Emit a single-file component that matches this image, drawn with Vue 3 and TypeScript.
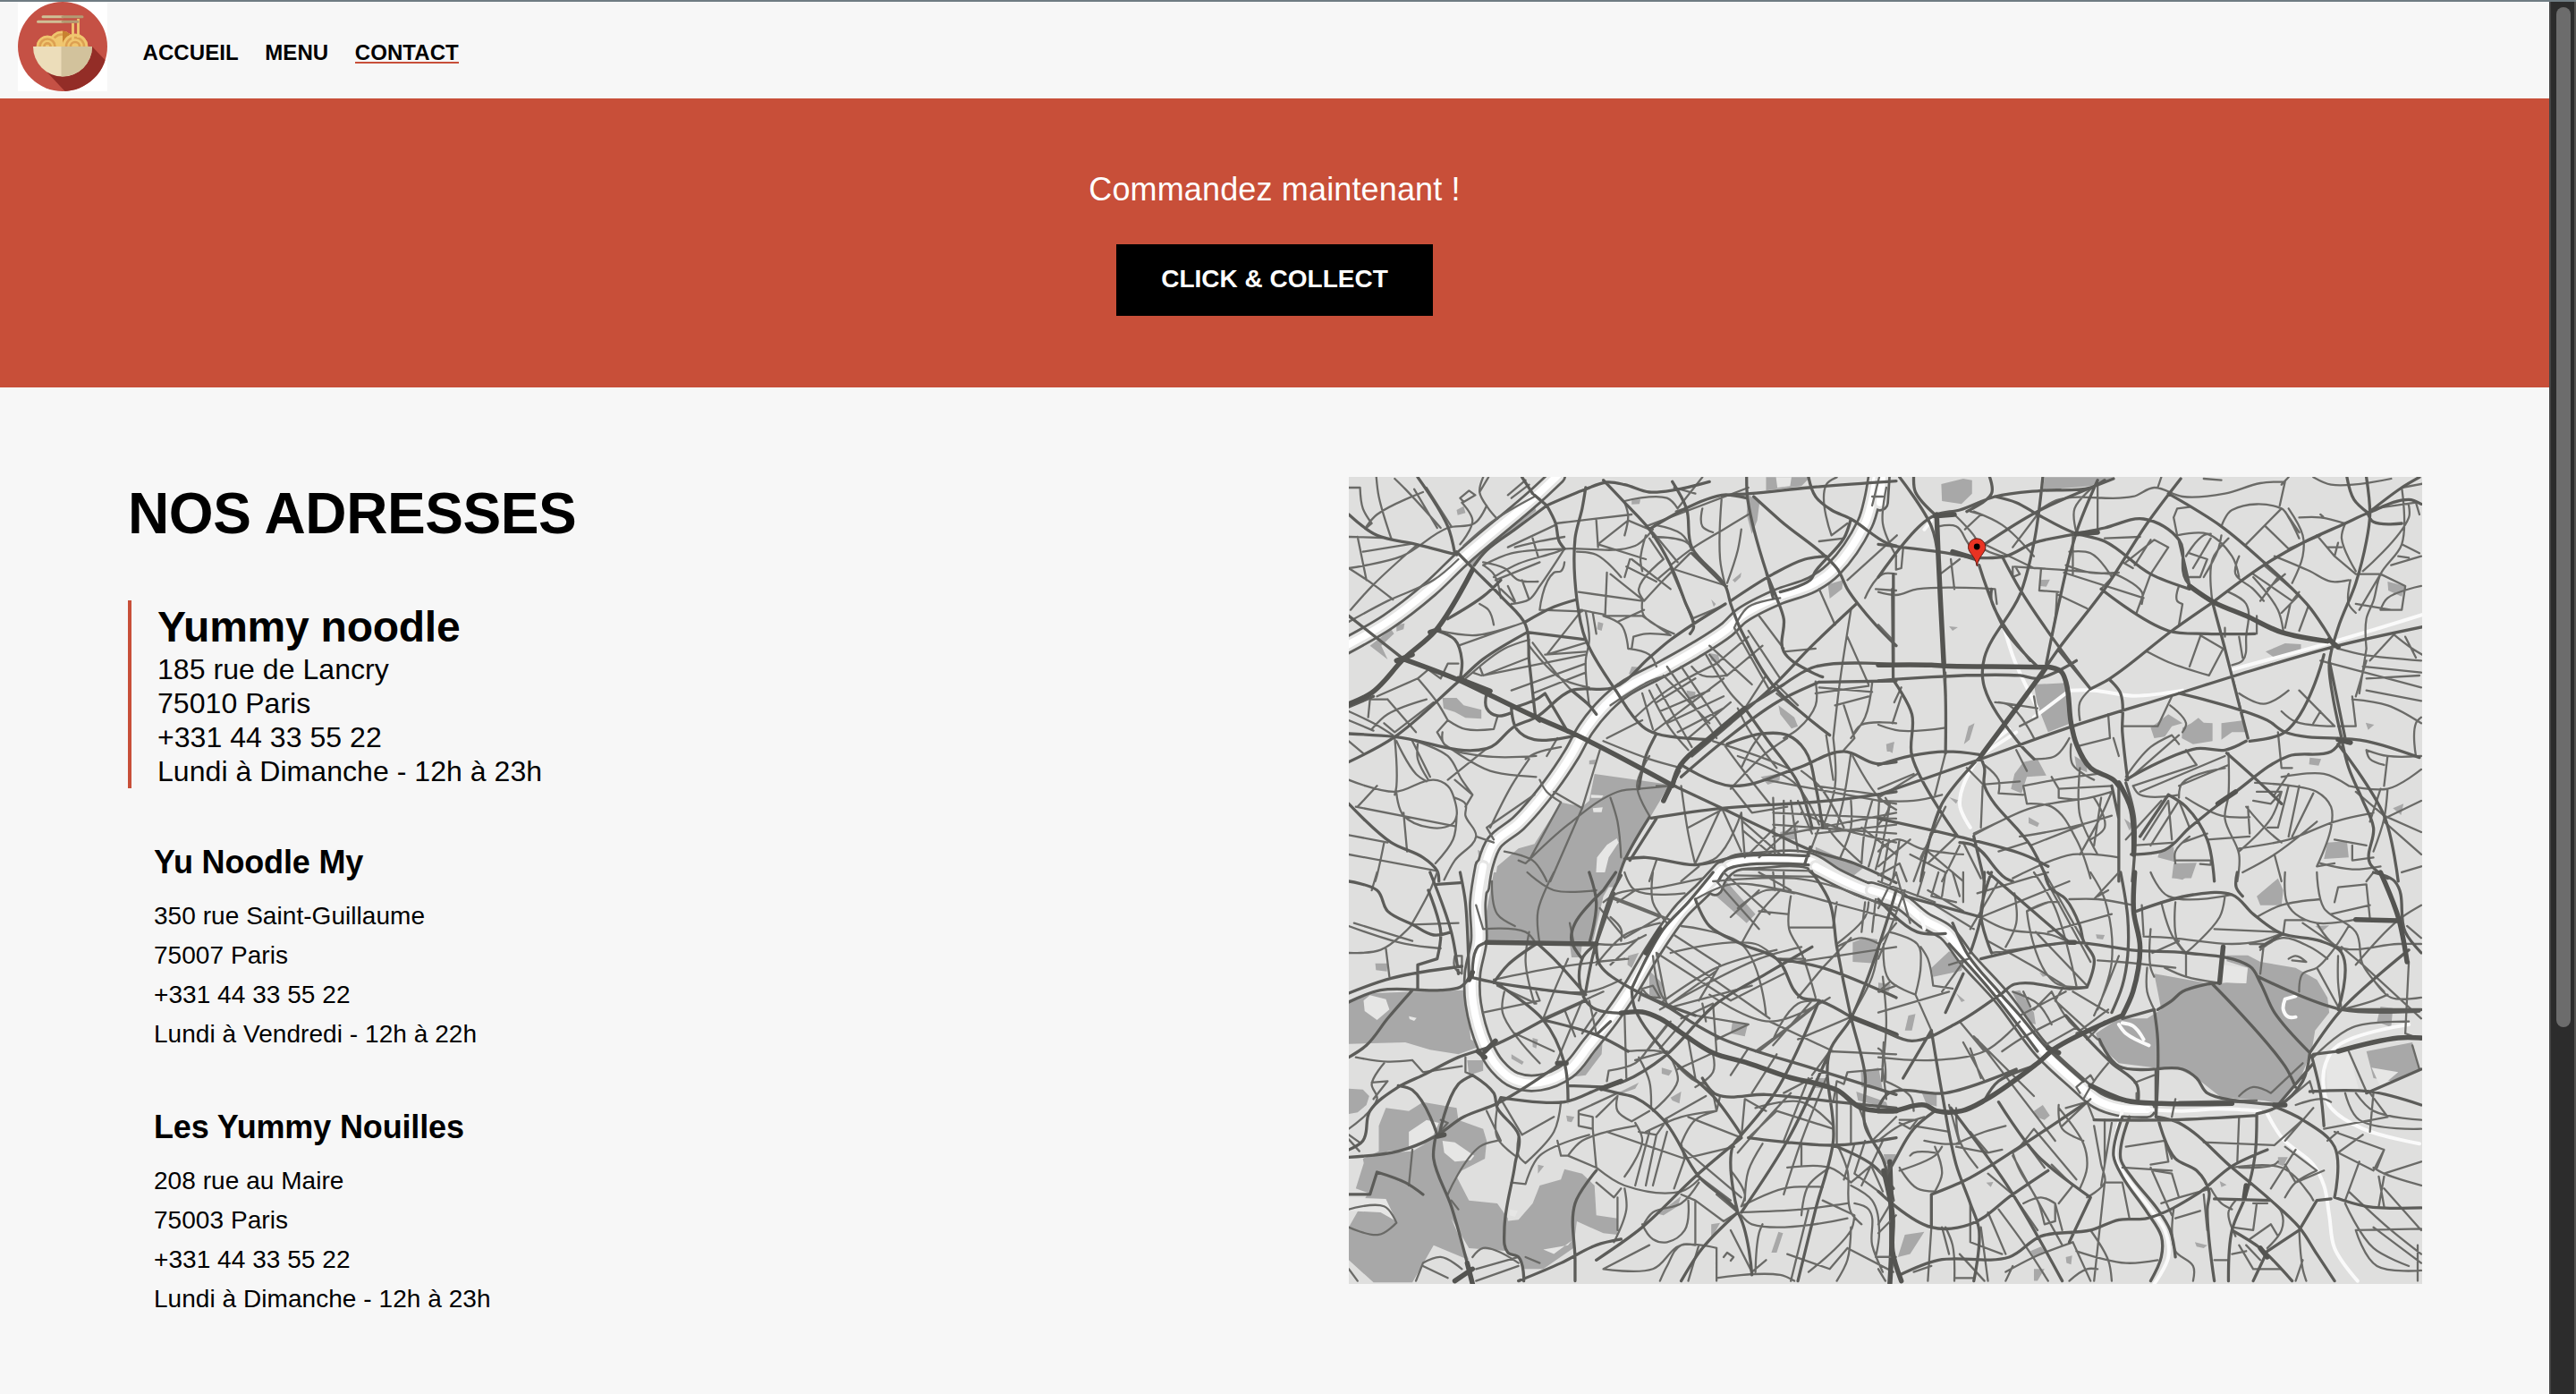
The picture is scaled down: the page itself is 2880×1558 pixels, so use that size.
<script setup lang="ts">
interface Address {
  name: string
  lines: string[]
  selected?: boolean
}

interface Tile {
  id: string
  x: number
  y: number
  parks: string
  pale?: string
  water: string
  narrow?: string
  major: string
  medium: string
  minor: string
}

const links = [
  { label: 'ACCUEIL', active: false },
  { label: 'MENU', active: false },
  { label: 'CONTACT', active: true },
]

const addresses: Address[] = [
  {
    name: 'Yummy noodle',
    lines: ['185 rue de Lancry', '75010 Paris', '+331 44 33 55 22', 'Lundi à Dimanche - 12h à 23h'],
    selected: true,
  },
  {
    name: 'Yu Noodle My',
    lines: ['350 rue Saint-Guillaume', '75007 Paris', '+331 44 33 55 22', 'Lundi à Vendredi - 12h à 22h'],
  },
  {
    name: 'Les Yummy Nouilles',
    lines: ['208 rue au Maire', '75003 Paris', '+331 44 33 55 22', 'Lundi à Dimanche - 12h à 23h'],
  },
]

// Turns "M x,y x,y ..." polylines into smooth curves, keeping sharp corners sharp.
function smooth(d: string): string {
  return d
    .split('M')
    .filter((part) => part.trim() !== '')
    .map((part) => {
      const pts = part
        .trim()
        .split(/\s+/)
        .map((pair) => pair.split(',').map(Number) as [number, number])
      const tangents = pts.map((p, i): [number, number] => {
        const a = pts[i - 1]
        const b = pts[i + 1]
        if (!a || !b) return [0, 0]
        const u = [p[0] - a[0], p[1] - a[1]]
        const v = [b[0] - p[0], b[1] - p[1]]
        const lu = Math.hypot(u[0], u[1])
        const lv = Math.hypot(v[0], v[1])
        if (lu === 0 || lv === 0 || (u[0] * v[0] + u[1] * v[1]) / (lu * lv) < 0.45) return [0, 0]
        const tx = u[0] / lu + v[0] / lv
        const ty = u[1] / lu + v[1] / lv
        const lt = Math.hypot(tx, ty)
        return [tx / lt, ty / lt]
      })
      let out = `M${pts[0][0]} ${pts[0][1]}`
      for (let i = 1; i < pts.length; i++) {
        const p = pts[i - 1]
        const q = pts[i]
        const k = Math.hypot(q[0] - p[0], q[1] - p[1]) * 0.33
        const s = tangents[i - 1]
        const t = tangents[i]
        const c = [p[0] + s[0] * k, p[1] + s[1] * k, q[0] - t[0] * k, q[1] - t[1] * k]
        out += `C${c.map((n) => n.toFixed(1)).join(' ')} ${q[0]} ${q[1]}`
      }
      return out
    })
    .join('')
}

// The map is split in four tiles; every tile has its own drawing units.
const tiles: Tile[] = [
  {
    id: 'nw',
    x: -8,
    y: -8,
    parks:
      'M545,120 550,138 470,215 400,285 370,335 352,312 400,245 480,170ZM715,1020 925,1055 900,1110 870,1170 800,1310 770,1400 430,1400 440,1330 500,1270 545,1255 620,1115 680,1130 700,1110ZM285,765 325,765 345,790 395,805 395,835 350,832 320,812 288,800ZM1150,85 1182,105 1175,170 1160,215 1145,150ZM1200,25 1325,25 1300,55 1200,70ZM1375,385 1418,370 1415,400 1380,432ZM1340,1265 1475,1335 1440,1368 1340,1315ZM1185,1030 1240,1018 1238,1042 1205,1056ZM80,590 140,535 148,550 112,590 130,636ZM1235,790 1280,830 1290,860 1272,868 1240,820ZM1040,615 1065,620 1070,650 1045,640ZM975,740 1000,745 1000,772 980,768ZM820,660 845,662 832,690 812,685ZM725,510 740,515 735,540 722,535ZM325,135 345,122 350,145 328,152ZM820,100 845,100 842,115 820,116ZM155,520 178,515 175,535 155,542ZM700,975 718,972 715,988 700,988ZM1540,925 1562,915 1555,945 1542,945ZM1105,370 1130,345 1128,360 1112,378ZM1240,1215 1290,1200 1285,1240 1240,1240ZM1045,435 1058,450 1052,460ZM385,1275 405,1285 390,1320Z',
    pale: 'M1228,25 1272,25 1268,55 1232,60ZM778,1236 783,1250 755,1300 738,1380 718,1375 722,1300 750,1258ZM705,1090 740,1092 735,1100 705,1100ZM710,1135 738,1132 735,1148 712,1148Z',
    water:
      'M1512,20 1500,100 1480,180 1390,335 1330,385 1230,428 1130,490 1090,535 1000,605 900,672 800,735 745,790 690,870 650,955 590,1060 500,1185 432,1250 405,1330 395,1400M1055,1400 1070,1360 1110,1320 1180,1310 1320,1310 1400,1365 1480,1410M610,20 545,92 340,298 250,400 130,510 10,592',
    major:
      'M370,335 265,540 175,635 85,748 20,785M175,635 330,705 410,750 550,830 665,890 930,1055M330,700 420,742M935,1060 958,990 1050,890 1140,800M932,1055 910,1110M155,640 200,620M545,825 560,840M250,545 275,535',
    medium:
      'M20,150 100,220 210,250 325,285M325,275 375,335 455,430 520,520 530,640 548,830M320,280 300,190 215,25M545,85 580,120 680,70 750,42 800,50 870,75 940,68 1040,40M375,320 410,270 490,200 580,120M540,80 510,25M580,120 605,180 615,240 630,265M690,60 680,130 660,230 665,435 690,570 775,740 850,860 890,885 1040,905M740,35 800,110 870,200 930,320 970,440 995,530 985,550M935,40 975,130 990,260 1085,390 1100,450 1130,540 1225,730 1380,890M1145,25 1148,100 1200,340 1230,430 1250,500 1250,610 1330,680 1360,695M1080,85 1155,80 1320,60 1568,38M1320,25 1340,90 1385,135 1440,165 1540,245 1568,255M1165,90 1240,170 1400,330 1430,400 1460,450 1510,520 1568,590M1560,350 1560,650M1250,720 1340,660 1568,654M1140,800 1250,720M1350,712 1568,708M1350,712 1230,780 1080,910 960,1030M20,490 100,565 175,635M20,980 145,900 330,710 400,635 525,545M20,885 150,895 410,935 490,860 550,830 650,740 770,730 870,630 930,570 1085,450M940,1060 1075,1135 1225,1220 1325,1275 1450,1320 1568,1385M875,1168 1075,1135 1380,1110 1568,1080M960,990 1100,1060 1290,1000 1420,945 1510,985 1568,980M20,1120 140,1250 230,1300 270,1345 275,1380M1455,450 1330,590 1220,725 1100,850 990,960M520,510 600,460 665,435M300,500 400,425 450,370M335,700 340,640 320,570 270,540M690,570 525,545M665,890 545,905 495,870 480,800 550,770 575,750 640,880M410,750 410,800 440,825 480,815M650,740 700,790 720,820M890,885 860,960 840,1070M1085,390 990,280M1100,440 1220,350 1310,300 1370,290M1440,165 1420,230 1340,340 1325,370 1240,410M1090,920 1190,885 1260,890 1310,940 1340,1060 1360,1200M1200,340 1220,430M1140,800 1200,900 1290,1050 1330,1200M870,200 1075,85 1145,95M955,1010 920,1090M870,1165 800,1310 780,1380M890,1170 815,1310M800,1305 860,1300 1000,1325 1130,1295 1320,1295M1065,1380 1090,1340 1140,1325 1320,1325M1325,1265 1310,1320M20,795 90,760',
    minor:
      'M20,60 52,60 60,130 85,180 70,195M98,25 105,90 140,230M150,30 180,65 280,195M205,65 270,195M240,60 310,190M70,190 100,150 230,75M20,225 115,228M45,225 70,370M60,275 200,248M20,330 170,290 300,195 375,180 410,120M20,330 90,385 145,435M25,470 90,385 210,255M20,510 130,440 260,370 330,300M340,110 370,170 335,250M335,95 360,70 378,85 345,108 335,95M400,25 390,75 415,130 440,165M415,25 390,75M345,255 430,170 545,90M470,85 520,35M480,95 530,50M450,430 430,350 400,320M400,310 460,330 500,370 555,375M430,360 500,315 610,275 630,265M435,370 560,310M630,265 560,390 530,435 480,450M630,310 620,340 600,345 560,470M450,400 490,445M470,390 490,440M510,370 530,435M400,320 480,280 630,265 830,255 880,200M490,260 560,240 630,225M540,230 555,290M605,180 640,175 820,150M605,185 470,260M720,170 725,260M665,275 720,285 790,360M725,250 860,300M800,110 810,155 800,220M730,245 810,170 870,200M800,105 920,95 950,130 1020,25M860,190 1150,60M970,130 945,140M860,220 845,300 850,340M870,230 910,300 840,400 855,440M820,300 930,400M805,325 890,375M815,300 800,360M760,350 855,440M750,345 745,490 850,490M670,410 850,440 855,490 940,550M675,470 740,485M855,440 910,370 985,280M855,470 780,510M895,365 930,330 1090,390M880,225 970,240 990,260M885,185 960,215 990,270M880,210 950,310M970,440 930,330M970,440 990,500 1070,460M690,475 700,570 690,640 700,790M710,480 720,550M740,490 790,520 810,600M820,600 825,560 860,550 930,555 850,490M810,600 870,620 890,660M690,580 580,620 680,470M540,580 650,740 690,780M690,620 400,690 390,660M530,570 460,600 370,680 395,690M530,630 400,690M530,590 620,700 700,730M540,750 690,680M480,740 690,650M575,620 690,610M350,700 390,660M390,450 415,470 430,520M520,510 330,590M275,540 380,555 520,510M560,470 680,475M20,810 90,850 145,890M20,840 90,875M75,830 80,770 130,770M100,760 215,700 270,780 300,840 270,880 290,920M215,700 245,670 280,700 300,650 330,650M260,780 150,880 120,850M130,770 210,880M300,840 350,870 430,870 440,830M85,870 130,820 240,770M150,900 155,1060 150,1090M155,910 210,1020 240,1045M200,910 250,1030M210,910 300,960 340,1040 370,1090M215,920 215,970 245,1040M20,910 60,950M285,880 290,920 400,960 550,960M290,920 420,1010 550,1030M20,1040 150,1080 260,1040 300,1060 320,1110 325,1160 310,1190 250,1200 175,1160 155,1085M45,1130 100,1060M40,1130 320,1195M175,1150 185,1280M20,1225 130,1250M120,1250 100,1360 95,1380M20,1290 270,1345M265,1320 315,1240 325,1160M290,1375 320,1310 380,1230 350,1160 350,1120 320,1100M410,935 300,1040M320,1040 370,1090 350,1130M530,970 480,1060 420,1200M520,970 550,950 620,930M600,1080 680,1135 730,940M610,900 580,960M560,1040 580,1080 620,1115M740,910 870,970 960,1000M750,900 850,840M760,790 870,710 920,690M870,740 930,870 980,940M890,720 990,930M910,690 1040,850M920,660 1060,900M960,660 1080,870M990,660 1020,690 1090,690 1040,620M850,750 880,870M890,780 1000,700M900,810 1040,740M920,850 1080,760M950,880 1080,800M980,900 1100,780M830,830 920,740 1060,650M880,880 1080,700M1030,620 1100,750 1140,800M1040,590 1160,720M1110,530 1210,740M1150,540 1240,700M1060,650 1150,560M1090,690 1190,590M1140,800 1200,690M1180,490 1250,600M1350,400 1395,520M1250,610 1340,600M1510,400 1568,405M1480,430 1530,350 1568,350M1540,60 1530,180 1568,290M1500,90 1530,90M1520,25 1500,120M1570,220 1430,370M1440,470 1410,700 1390,900M1430,560 1490,720M1500,715 1480,830 1440,900M1350,730 1500,745M1340,750 1490,725M1395,790 1490,760M1420,790 1450,900M1340,710 1340,790 1290,870 1250,900M1230,750 1380,890M1230,720 1290,790M1370,890 1390,1040M1450,880 1470,855 1568,850M1450,900 1420,940M1230,1000 1150,870 1120,800M1050,910 1200,970 1260,1000M1130,1000 1160,930 1190,880M1080,920 1130,1000 1210,1120M1100,1070 1200,950 1260,900M1100,1060 1160,1150 1260,1130M1200,1040 1290,1060 1568,1120M1120,960 1280,1050 1350,1190M1300,1010 1350,1060 1420,1200M1390,900 1395,1060 1360,1200M1440,950 1420,1100 1400,1200M1445,960 1520,1100 1568,1140M1340,1060 1520,1090M1220,1100 1225,1290M1250,1110 1250,1290M1270,1110 1290,1280M1290,1110 1330,1220M1075,1140 980,1200M1075,1135 1130,1280M1070,1140 1000,1320M960,1060 980,1220 1000,1325M870,960 835,1060 870,1160M945,1060 890,1060M1130,1150 1140,1300M1135,1180 1240,1290M1135,1210 1215,1290M1150,1290 1225,1200M1180,1300 1290,1180M1220,1150 1568,1170M1220,1190 1568,1220M1220,1230 1568,1150M1300,1150 1400,1200 1568,1250M1340,1220 1568,1190M1350,1160 1400,1240 1470,1320M1440,1110 1440,1200 1410,1300M1500,1110 1480,1200 1470,1320M1520,1100 1510,1240 1490,1330M1550,1120 1530,1250 1510,1340M1568,1290 1470,1200M1320,1295 1350,1200M1130,1340 1330,1345M1110,1360 1340,1365M1000,1325 1060,1300 1130,1150M890,1310 870,1380M1010,1330 960,1380M1075,85 1070,300 1085,390M1150,150 1080,200 990,265 930,320M1130,200 1120,270 1090,380M1020,130 1020,190 1050,210M845,1070 780,1080 640,1190 520,1320 500,1310M930,1060 840,1070M760,1100 780,1180 790,1300M680,1135 590,1380M620,1115 530,1310M460,1280 540,1310 580,1380M545,1090 410,1200 430,1240M380,1230 430,1250M1110,530 1150,460 1240,430M1385,220 1430,180M1400,25 1370,50 1385,220M1350,240 1420,230M940,60 1000,80',
  },
  {
    id: 'ne',
    x: 592,
    y: -8,
    parks:
      'M178,48 240,30 265,35 265,80 235,115 180,105ZM470,25 665,25 600,55 465,68ZM440,720 530,715 545,850 480,880 450,790ZM385,1020 410,980 450,970 475,1025 420,1030 405,1085 375,1070ZM860,865 885,850 905,832 920,848 945,850 945,910 890,920 858,900ZM970,850 1035,840 1040,880 1000,880 970,905ZM1095,610 1150,582 1195,585 1195,605 1120,630ZM1270,1250 1325,1245 1330,1300 1260,1305ZM835,1320 900,1318 885,1370 830,1370ZM1440,375 1490,390 1480,425 1442,405ZM770,865 820,820 860,850 830,860 810,895 780,900ZM1455,1135 1485,1120 1478,1158ZM1220,965 1252,970 1245,992 1218,988ZM255,860 272,850 258,905 242,920ZM22,920 45,912 40,950 25,940ZM455,370 485,368 475,392 458,390ZM1378,848 1402,855 1385,872ZM425,1165 455,1185 450,1198 425,1185ZM795,1280 835,1265 838,1315 790,1300ZM555,960 590,985 590,1015 560,1000ZM200,1098 225,1108 220,1120ZM695,1170 720,1190 710,1210ZM200,525 225,528 210,540Z',
    water: 'M10,20 5,110',
    narrow:
      'M358,540 385,640 450,800M1568,475 1320,565 1000,670M860,740 720,758 610,740 540,740M440,830 530,750M390,880 300,950M370,870 290,955 230,1120 260,1200M150,170 130,200',
    major:
      'M0,655 150,655 185,658 320,660 475,662M475,660 515,675 530,710 545,850 560,920 600,1000 665,1040 680,1060M165,150 170,300 185,650M290,960 440,720 475,662M680,1050 715,1140 722,1290M880,390 950,445 1040,490 1140,545 1270,575M1010,1080 960,1120M1275,570 1300,595M1300,905 1335,915M160,155 215,150M560,215 620,210M210,275 280,300',
    medium:
      'M0,708 400,690 450,700 560,640M185,660 190,760 190,950M0,990 90,960 190,945 285,955 300,1000 300,1060 430,1260 480,1380M0,250 170,275 280,295 360,290 440,245 560,215 640,195 750,165 850,235 870,370 945,445M0,360 120,185 165,150 230,135 330,90 460,70 600,60 640,35M330,90 390,110 450,150 550,210 640,240 770,350 880,400M465,25 440,245 400,420 300,630 300,730 400,920 440,970M855,30 760,180 640,400 510,600 475,660M665,30 450,140 300,250M620,35 560,210 510,450 475,650M315,25 320,80 250,140M350,290 400,400 490,560 600,735 655,700 830,540 945,445M945,445 1090,320 1200,245 1320,180 1385,145 1500,100 1535,115M850,235 880,390M945,445 980,600 1010,740 1045,900M820,80 970,190 1090,310 1215,455 1260,530 1290,590M1380,25 1390,150 1380,240 1350,380 1300,530 1275,650 1285,760 1310,900M1325,25 1345,100 1385,145M1385,145 1480,60 1530,25M1568,520 1300,590 1010,690 850,750 550,860 290,970 0,1090M850,750 1100,840 1150,880 1380,910 1530,965M1050,910 1150,880 1260,620M1310,905 1280,945 1160,960 1010,1080 880,1200 810,1275 715,1290M1310,905 1330,1000 1370,1110 1400,1200 1390,1320 1440,1370M1300,920 1430,1160 1470,1380M1275,640 1320,900M1040,910 980,940 900,935 700,1040M985,950 1070,1040 1140,1120M680,1055 680,1380M660,1060 680,1170M700,1050 725,1170 718,1380M510,605 600,735M655,705 685,750 690,880 705,1040M60,25 150,190 170,300M100,25 105,75 160,150M40,400 42,700M45,710 95,820 95,960 225,1230M290,960 180,1120 120,1380M820,1090 870,1130 930,1240 950,1380M820,1090 740,1230M630,400 820,540 930,550 1065,550M285,320 360,540 450,660M320,400 320,440 430,640M0,1170 225,1230 410,1290 480,1330M230,1250 270,1260 360,1370 380,1380M270,1230 300,1380M1385,150 1400,175 1480,180',
    minor:
      'M0,410 50,420 110,400 330,400 335,450M0,520 40,570M45,780 65,730M40,850 65,760M0,855 60,875 190,865M190,680 190,760M205,300 215,400M175,350 230,300M70,265 65,330 50,335 50,290M170,190 220,190 250,240 280,300M215,150 270,220 290,260 350,290M245,200 290,150 260,140M270,140 350,185 440,290M450,150 380,260M300,250 440,330M385,325 510,335 660,350M380,325 380,360 400,350 390,330M460,335 455,405 510,410M510,420 590,465M505,410 500,500 490,560M525,345 750,430M540,275 600,280 660,360M530,320 600,345 680,345M550,220 550,350M560,210 555,130 620,45 620,200M450,140 510,100 720,90 780,60 860,90 980,80 1080,45 1150,40 1135,120M800,25 790,60M920,30 970,35M1140,50 1160,25M1230,25 1280,50 1450,30M1570,40 1480,60M640,230 740,225M700,310 780,235 820,260 770,350M725,320 770,235M690,310 720,330M730,480 770,350M630,400 670,350 745,410 745,450M850,390 845,440 860,450 850,520M835,160 845,220 930,215 1000,290 1020,360M835,160 845,130 880,125M970,190 1000,135 1140,130 1160,160 1190,230M1140,130 1040,250M1160,130 1200,220 1200,290 1170,380M1150,140 1190,210M1190,160 1250,160 1320,180 1310,230 1350,340M1240,220 1290,290 1300,245M1270,260 1310,260M1290,290 1350,350M1095,190 1160,265 1250,220M1250,150 1258,158M880,360 910,360 930,300 880,280M870,290 920,220 940,215M890,330 940,230M920,360 960,270 970,220M945,445 945,300 990,230M1020,290 1010,350 1060,400 1090,440M1090,320 1170,400M1120,290 1220,340 1280,375 1330,370M1060,350 1170,440 1190,410M1060,360 1130,470 1145,540M1080,440 1130,360M1100,400 1150,350M1150,530 1165,450M990,410 1040,450 1040,560 1030,640 1000,655M1070,490 1070,550M980,530 980,560M1190,540 1215,460M1190,420 1140,480M1020,560 1030,630M910,560 880,660M760,610 820,645 935,690 975,600 910,555M1335,370 1330,450 1350,480M1350,350 1420,350 1360,470M1480,60 1480,250 1420,350 1400,440 1380,500 1380,600M1500,120 1500,160 1370,340M1400,130 1520,110 1530,150M1480,250 1530,280M1470,290 1500,295M1420,350 1490,390 1480,470 1420,470M1450,320 1535,290M1420,470 1440,430 1535,390M1350,450 1450,470M1490,560 1520,630M1455,550 1510,600 1568,640M1460,550 1390,640M1300,600 1370,620 1535,640M1380,600 1360,750M1250,640 1535,730M1380,700 1530,690M1370,660 1535,680M1380,740 1535,775M1340,770 1440,790 1535,850M1340,760 1350,860 1300,860M1380,640 1350,760M1190,740 1290,860M1020,750 1090,785 1160,740M1230,850 1250,810M1140,810 1180,845 1290,860M1000,690 1030,830M570,840 570,780 600,735M690,860 790,860 830,760M825,790 870,850 860,880M700,1030 770,930 830,890 850,920M715,1030 850,890M650,820 655,900 570,925M665,900 680,960M720,1060 900,990 870,940M740,1080 980,960M850,1060 990,990M850,1100 860,1050 980,1000M720,1060 740,1090 850,1090M330,780 370,790 440,900M340,780 450,800M440,760 450,830 400,860M390,940 420,1010M300,990 340,1040 340,1085M300,1055 400,1045M410,1060 500,1040 620,1020M510,1070 510,1100 570,1105 660,1080M490,1030 510,1070 660,1060M410,1060 420,1120 490,1130 560,1240 600,1370M340,1085 410,1090M540,900 500,960 440,970M545,920 550,990 610,1040M270,1225 430,1135 570,1105M295,1060 290,1200M570,1000 570,1160 620,1290M610,1100 640,1200 600,1240M630,1100 620,1180 610,1260M570,1290 630,1160 660,1080M360,1170 270,1220M400,1230 540,1200 660,1160M430,1260 580,1190M340,1280 420,1250M380,1370 550,1290 680,1300M700,1240 800,1110M750,1240 820,1110 830,1240M770,1260 850,1110 880,1200M720,1260 840,1250M870,1100 970,1160 1050,1165M990,950 990,1090 980,1170 1020,1290 1015,1380M1065,1050 1170,1060 1240,1080 1280,1130 1280,1200 1240,1330M1070,1080 1140,1080 1110,1120 1060,1110M1040,1130 1100,1210 1140,1250M1045,1130 1050,1220M1140,1080 1110,1170 1020,1280M1160,1060 1130,1200 1100,1200M1190,1060 1160,1230M1230,1085 1170,1230M1020,1270 1160,1240 1290,1180 1400,1150M1030,1350 1120,1290 1240,1180M1120,1290 1140,1380M930,1240 1050,1230M910,1310 940,1310 940,1325 910,1322M840,1310 910,1310M860,1250 930,1220M840,1320 840,1280 880,1230M1250,1320 1340,1340 1420,1330M1340,1260 1340,1310 1400,1300M1290,1240 1380,1260M1240,1330 1290,1320M1130,880 1140,1000 1170,1000M1140,1030 1260,1020 1330,1060M1160,1020 1120,1090M1330,1060 1440,1070 1535,1005M1440,1070 1430,1170 1400,1280M1420,1070 1390,1180M1440,960 1430,1060M1535,960 1440,960 1380,940 1390,970 1430,990M1520,960 1520,850 1535,830M1430,1160 1535,1215M1430,1170 1535,1110M1430,1180 1535,1290M1350,1080 1430,1160M1480,1350 1535,1330M0,1110 100,1110 180,1090M0,1100 110,1020M0,1070 100,1020M0,1190 30,1130 20,1100M0,1280 50,1240 120,1270 240,1290M30,1240 10,1380M60,1240 40,1380M0,1330 90,1240M180,1120 100,1380M190,1130 120,1300M220,1230 140,1320M230,1260 180,1380M130,1270 240,1380M240,1250 290,1370M90,1290 190,1350M0,1360 60,1320 80,1380M250,1000 300,1060M190,950 160,1090',
  },
  {
    id: 'sw',
    x: -8,
    y: 442,
    parks:
      'M430,0 780,0 740,80 710,235 410,235 405,160ZM410,160 475,185 475,225 410,228ZM20,430 90,405 215,400 350,395 365,560 400,580 330,610 250,595 180,570 20,575ZM20,725 60,728 78,750 70,780 45,805 20,810ZM105,850 125,790 190,800 230,770 325,790 330,830 400,860 410,900 405,960 340,1000 325,1020 360,1100 440,1110 470,1160 470,1270 360,1260 310,1160 260,900 190,930 130,935 65,990 60,960 105,935ZM65,965 130,940 200,935 265,890 310,1160 360,1300 260,1250 200,1375 90,1375 20,1300 20,1190 75,1075 40,1060ZM560,1050 620,1030 630,995 680,1010 715,1050 720,1150 780,1160 780,1215 740,1210 665,1170 655,1260 570,1330 510,1330 500,1290 465,1270 460,1170 500,1165 540,1110ZM635,660 700,570 738,560 735,610 690,680 640,688ZM1040,60 1080,20 1170,140 1145,170ZM1445,235 1480,218 1515,225 1510,305 1445,300ZM1468,670 1518,655 1530,730 1470,720ZM1105,500 1148,510 1140,550 1100,540ZM870,330 905,370 910,430 870,410ZM355,630 400,630 400,665 360,680ZM645,240 680,240 675,285 650,285ZM1455,735 1540,770 1545,790 1460,765ZM895,1145 960,1085 950,1120 910,1150ZM810,280 840,270 820,320 808,310ZM905,655 935,665 925,682 905,675ZM930,755 960,735 955,775 935,765ZM95,305 130,305 128,332 97,328ZM480,610 515,635 510,645 480,625ZM1045,1180 1070,1175 1045,1230ZM1235,1205 1248,1210 1230,1275 1215,1275ZM780,740 840,705 830,725 790,742ZM635,815 658,820 650,838 638,835ZM555,980 572,985 555,1010ZM1340,690 1375,690 1370,725 1335,722ZM540,555 555,560 550,590 540,585Z',
    pale: 'M62,430 80,412 125,425 135,460 100,495 65,465ZM285,900 320,905 375,950 365,965 320,970 290,940ZM20,1090 125,1095 155,1170 110,1140 20,1135ZM570,1265 640,1250 650,1235 600,1280ZM190,870 240,830 275,840 260,880 190,930ZM475,1130 498,1135 490,1155 475,1150ZM190,482 212,488 205,498 192,492Z',
    water:
      'M400,-20 385,100 388,230 370,340 372,440 405,580 440,650 490,697 560,705 640,665 700,580 760,490 815,395 880,265 960,130 1020,60 1075,-10M1340,-20 1460,50 1580,95',
    major:
      'M410,235 720,240M790,472 850,468 900,490 975,550 1050,605 1150,640 1260,685 1400,730 1470,790 1568,800M1440,485 1568,545M360,360 370,335M405,600 435,565M355,1310 370,1380M1550,970 1555,1250 1550,1380M735,725 790,700M900,190 860,270M270,885 290,880M320,1370 370,1330M385,600 405,620M610,640 635,640',
    medium:
      'M20,435 110,395 280,395 335,385 360,355M20,405 140,355 340,315M335,0 350,100 360,350 435,370 690,410M250,0 310,200 330,340M245,60 280,200 270,290 215,310 215,390M20,30 100,60 130,130 200,175 260,210 310,200M410,235 385,250 370,350M720,240 680,290 685,420 720,460 790,472M740,60 660,170 650,230 680,290M550,240 470,310 430,370M555,240 600,290 690,410M435,370 570,495 630,640 640,770M570,495 720,545 810,600M570,495 430,580 330,620 230,680 160,720 80,800 60,900 20,930M20,955 160,935 265,885 345,820 440,775 620,640M690,430 570,495M275,885 330,710 370,680 430,740 440,790 500,880 490,980 460,1200 470,1275 500,1290 515,1370M265,890 260,960 310,1120 355,1310 370,1380M270,880 200,730 160,715M440,780 450,755 630,770 740,720 800,700 910,620 1060,440 1200,340 1330,250M720,545 760,500M740,720 640,715M730,725 780,740 830,755 910,830 1010,1020 1120,1140 1160,1350M820,395 830,460 920,610 1050,750 1130,880M850,410 920,450 1000,510 1080,560 1340,660 1568,745M720,240 730,310 820,390 1000,480M1000,90 1040,180 1130,240 1230,290 1300,420 1350,430 1440,485M1230,290 1360,320 1568,420M1330,0 1380,100 1400,250 1440,485 1480,680 1480,850 1530,960 1560,1100M1568,60 1440,490 1380,600 1390,900 1340,1130 1290,1370M20,620 70,580 130,490 200,395M1020,690 1060,745 1200,745 1400,770 1568,790M1130,880 1230,730 1350,430M1120,1140 1105,920 1130,880M1120,1140 1020,1260 960,1370M1130,1140 1260,900 1380,600M720,1000 660,1110 660,1300 660,1370M720,1300 850,1190 1000,1020 1130,890M500,1370 620,1310 720,1250 790,1230M230,1080 180,1040 100,1005 80,1080 20,1080M1150,890 1390,915 1568,890M1390,915 1500,980 1560,1060M1050,0 980,100 910,190 820,390M700,0 720,100 700,240M770,70 720,240M270,40 335,35M775,0 740,60M790,10 760,80 710,280 690,400',
    minor:
      'M100,0 85,60M270,0 250,60 200,170M20,180 180,240 280,255M35,170 200,230M200,175 110,260 20,270M125,255 135,350M200,175 330,170M380,110 400,190 520,200 550,240M530,200 520,300 545,440M320,280 340,280 340,340 320,320 320,280M425,30 440,140 490,180M525,0 600,60 720,60M600,0 555,130 560,240M645,170 655,230M200,630 130,635 40,620M120,640 85,710 100,760 20,860M85,705 130,700 90,760M200,630 230,670 340,650M350,620 350,670 370,680M20,880 50,905M20,895 50,935M270,880 300,840 280,830M200,930 190,1050M300,1080 390,920 440,900M310,1100 330,1130M440,790 440,890 490,950M410,800 450,900M510,880 600,820M500,890 500,950 520,975 600,870 620,770M450,760 510,880M20,1130 120,1120 155,1175 105,1215 20,1190M230,1310 280,1290 340,1330M230,1310 210,1370M230,1320 300,1360M370,1290 400,1260 440,1270 500,1310M380,1330 500,1290M380,1370 500,1320M20,1330 45,1370M480,1040 520,1045 560,950 700,880M610,900 620,950 640,950M520,1290 560,1310M460,400 455,470 500,560 560,640M400,470 560,430 550,400M490,540 600,600M430,360 600,320 800,290M440,380 550,440M540,390 700,400 790,360M640,290 600,400 570,490M570,490 740,400M680,430 610,630M700,430 720,540M720,470 680,540M630,460 660,550M800,480 805,690M805,600 900,600 920,610 970,550M830,630 920,600M750,700 755,665 830,640 880,570 920,510M870,590 930,500M900,590 980,480M840,620 870,700 875,790M930,620 950,700 880,800M950,650 1000,700 1030,710M980,560 1000,690M1050,610 1050,670 1000,720M670,800 780,740M670,800 670,850 710,860 710,820 670,810M720,820 780,750M780,750 780,800 820,835 870,800M710,860 720,990 640,950 680,900 830,850M750,870 970,960M830,840 850,900 800,1020M870,870 830,1050M890,880 860,1050M920,870 880,1050M860,870 960,820 1060,800 1070,750M840,870 890,880 920,830M910,830 1030,750M980,820 1130,890M1060,800 1000,830 960,910M960,910 970,960 1110,920M960,920 1130,1090M970,960 940,1060M720,990 800,1050 960,1070 1010,1030M720,1040 770,1090 790,1060M800,1060 805,1130 770,1240M780,1090 780,1200M850,1190 880,1140 960,1110 1010,1040M850,1180 880,1230 920,1240 970,1200 980,1100M740,1330 870,1250M740,1330 880,1330 960,1250 1060,1260M900,1370 920,1320 960,1250 1000,1250 1000,1100 960,1080M980,1370 1010,1250M1060,1260 1060,1370M1060,1360 1240,1350 1280,1370M1100,1200 1160,1340 1200,1300M1080,1290 1090,1275 1108,1290 1100,1302M1170,1340 1180,1210 1190,1180M1130,1150 1160,1180 1430,1160M1130,1140 1300,1130 1430,1110M1060,1080 1120,1140M1000,1100 1080,1170 1120,1140M1010,1020 1100,1100M1100,1000 1140,1080 1130,1120M1120,940 1200,830 1270,740M1190,910 1150,1000 1140,1100M1150,890 1230,800 1390,860M1250,740 1330,690M1170,790 1300,770 1390,850M1320,690 1250,900M1370,690 1300,900 1250,1080M1260,990 1380,990 1440,1040M1300,910 1300,980M1130,1120 1250,1060 1360,1055M1380,990 1320,1050 1300,1150M1360,1100 1450,1150 1440,1200 1320,1340M1400,910 1430,1000 1440,1140 1470,1180M1440,1050 1500,1100 1520,1200 1510,1290 1550,1290M1500,980 1440,1040M1450,910 1420,1030M1480,900 1450,1010 1530,1080M1500,990 1530,1070M1530,900 1470,1050M1450,1110 1490,1130 1500,1250 1530,1340M1440,1190 1430,1300 1400,1370M1430,1260 1560,1340M1260,1280 1380,1330 1430,1260M1320,1130 1270,1370M1390,770 1400,700 1420,710 1430,670 1530,660 1540,760M1400,740 1400,920M1440,770 1440,910M1460,780 1500,900 1568,820M1380,600 1568,610M1440,485 1290,560M1360,430 1180,600M1350,435 1250,530 1170,600M1340,430 1290,440 1220,560M1210,500 1390,600M1040,410 1210,500 1380,420M1220,580 1330,430M1100,430 1250,340M900,440 1060,320 1230,260M900,460 1180,290 1300,250M930,440 1060,330M940,450 1160,380M890,270 1100,430M920,250 1210,490M940,210 1070,310 1010,430M960,180 1130,240 1200,480M890,270 920,450M930,270 1170,240 1230,290M880,280 900,400 920,440M850,390 880,380 900,420 870,415 850,390M840,430 850,390M1130,240 1180,140 1240,60M1180,130 1260,140M1080,0 1210,140M1060,30 1180,190M1000,90 1100,40 1250,60 1380,100 1568,160M1050,30 1280,20 1400,50 1568,130M1120,120 1200,60 1280,70M1100,150 1180,60M1270,80 1265,190 1300,270 1340,420M1265,185 1390,185M1220,0 1225,60M1250,0 1250,60M1180,0 1270,60M1400,250 1470,220 1520,240 1568,170M1400,240 1480,150 1490,100M1520,240 1500,350 1440,485M1400,100 1390,180M1480,100 1470,200M1510,90 1500,200M1290,300 1568,250M1240,290 1310,290M1360,320 1290,420M1360,320 1440,220M1520,400 1568,380M1530,350 1540,500 1530,650M740,100 780,70 900,50 1020,20M760,80 870,130 930,160M770,90 900,150M830,60 780,100M880,0 880,100 920,170M800,0 830,60 970,70M730,120 800,220 900,150M760,150 790,190 790,230M720,240 800,240 860,210M720,300 810,290M720,310 800,210 900,170M760,310 840,220M1000,480 1150,510 1060,560M960,490 1050,440 1060,600M1020,440 1030,500M950,660 1060,600M1050,740 1060,800M1130,890 1140,760 1200,800M1150,590 1100,680M1230,610 1160,740M1380,600 1330,680',
  },
  {
    id: 'se',
    x: 592,
    y: 442,
    parks:
      'M780,340 830,350 945,375 985,370 1040,372 1045,320 985,298 985,278 1045,278 1080,300 1180,320 1240,360 1270,420 1275,470 1235,530 1225,600 1190,700 1130,775 1090,765 970,755 900,690 850,660 780,655 680,640 625,580 615,540 680,490 760,490 800,460ZM150,320 200,265 245,295 235,330 155,350ZM1380,600 1510,570 1530,660 1450,700 1400,690ZM1070,80 1130,20 1145,60 1140,110 1080,110ZM840,0 890,0 860,25 832,18ZM378,400 400,395 440,470 445,510 420,500ZM75,1215 130,1205 90,1280 55,1290ZM440,800 465,780 485,815 470,830 445,820ZM1235,180 1275,178 1255,198ZM1130,955 1158,955 1145,985 1130,978ZM15,945 50,945 45,975 20,978ZM615,208 640,210 635,225 618,222ZM895,1240 930,1250 920,1260 900,1255ZM0,370 35,375 30,400 0,405ZM965,1035 985,1048 970,1055ZM530,1290 548,1285 545,1315 532,1310ZM430,1270 460,1255 470,1270 440,1290ZM440,1330 470,1330 450,1370 440,1370ZM305,1040 325,1038 318,1055ZM220,405 245,430 235,435ZM120,730 165,740 165,785 135,775ZM1420,450 1455,455 1450,520 1410,500ZM85,480 105,475 95,530 75,530ZM455,335 480,345 465,350Z',
    pale: 'M975,310 1043,320 1040,372 975,368ZM1395,655 1470,670 1420,720ZM1265,600 1330,600 1360,735 1270,735ZM30,60 170,120 215,180 180,210 130,190 60,120Z',
    water:
      'M-20,60 60,95 130,160 190,200 250,290 350,420 465,600 560,705 620,765 680,790 760,795',
    narrow:
      'M760,795 860,800 960,793 1080,800M1100,810 1145,895 1230,980 1260,1050 1275,1150 1290,1260 1355,1370M1530,910 1370,860 1280,790 1260,730 1265,640 1300,580 1500,510M120,140 130,190M680,510 700,540 765,580M690,505 720,515 750,560M1180,415 1150,425 1145,460 1160,485 1180,485M690,800 670,960 700,1020 770,1130 810,1200 820,1290 780,1380',
    major:
      'M480,590 510,605M600,715 700,765 800,775 1000,775M690,480 720,400 740,250 722,130 725,0M0,800 40,800 130,780 165,800 235,800 300,765 450,640 500,590 690,480M65,1370 40,1270 40,1150 15,1000M1350,158 1470,162M1420,0 1470,150 1495,300M1300,600 1470,555 1535,555M1040,1050 1035,1090M1080,1260 1100,1290M975,250 965,370M1120,780 1150,780M540,235 555,235',
    medium:
      'M210,170 255,280 340,400 400,480 470,580 580,700M200,240 320,400 450,600M0,520 95,565 215,510 350,405 385,375 540,390 590,385 610,290 580,230 570,180 530,90 485,50 470,0M290,290 545,235 730,262 870,270 1050,315 1080,370 1120,470 1220,605M540,235 310,0M300,0 290,150 260,270M320,0 290,140 320,270M685,0 705,150 705,280 690,380 660,470M0,90 110,200 190,205M75,80 290,150M730,130 890,75 1000,75 1060,140 1140,205 1250,230 1310,270 1300,460M1030,80 1012,50 1015,0M780,460 790,560 785,820M780,460 690,490M790,460 830,430 860,400 930,375 965,370M945,375 1150,650 1180,720M1075,350 1310,460 1530,465M1220,605 1310,460 1500,260M1220,605 1200,700 1130,785 1070,810 1065,950 1040,1080 1000,1200 990,1370M1225,615 1250,740 1260,850M785,660 860,660 900,690 930,740 1010,765 1120,780M1120,785 1200,830 1290,920 1290,1090 1380,1120 1535,1125M530,480 660,640 730,710 735,765M625,560 680,650 780,660M300,765 340,700 440,650M390,660 190,740 30,740 0,790M790,820 850,840 1000,990 1110,1100 1190,1190 1240,1280 1290,1370M790,820 840,960 900,1000 935,1070 930,1130 950,1370M610,830 830,830 1070,815M590,770 400,920 250,1030 150,1080 150,1190M150,530 180,740 220,980 260,1110 285,1200 270,1370M205,790 370,1060 520,1370M340,770 450,950 600,1090 540,1240M60,1350 170,1300 370,1290 460,1220 600,1200 680,1165 760,1160 900,1080 1000,985 1100,930M0,1070 150,1190 260,1180 380,1080 480,1000M20,1020 40,980 100,860 160,800M950,1095 1110,1100M1240,1100 1280,1095M1190,1200 1240,1100M1100,1270 1190,1200M1000,1200 1080,1260 1140,1330 1170,1370M1100,1270 1060,1370M1400,0 1460,30 1490,200 1535,270M1380,740 1535,660M1220,735 1390,735 1535,780M1230,610 1300,600M1130,780 1230,640M150,530 70,690M190,470 240,340M1535,460 1310,460M1145,205 1080,250M785,660 785,820M690,820 665,950 690,1020 760,1140 800,1220 800,1290 770,1370M710,820 685,960 715,1020 790,1130 825,1200 840,1290',
    minor:
      'M0,120 50,0M30,200 75,60M0,290 30,200 110,240 120,310 105,410 30,360 15,240M120,250 140,290 155,380 210,390M0,400 30,370M0,470 200,400M105,410 150,530M90,170 50,0M130,0 110,80M170,0 150,80 220,100M140,60 240,130M190,0 180,80M240,0 240,100M210,0 230,80M260,190 340,30M160,110 270,190M0,30 160,100M280,70 480,0M290,150 540,30M420,130 500,370 590,385M420,130 480,100M445,200 590,380M440,0 500,120 560,380M470,0 580,230M490,60 600,300M480,200 660,140M540,90 620,90 720,110M510,100 480,100 420,130M290,150 360,190 490,210 540,235M310,230 430,310 540,390M320,270 500,240M360,250 390,170 385,70M600,0 640,90 660,300 620,460M610,90 680,0M620,80 650,60M620,295 680,300 840,320M680,280 640,400 610,480M770,0 820,80 1000,75M840,100 845,230 870,270 965,150 980,80M800,100 830,210 860,260M750,215 830,220 1000,240 1080,230 1140,205M770,190 770,320 780,350M760,320 760,400 780,460M810,320 870,350 960,370M870,270 870,350M775,270 850,230M745,110 750,210M950,190 1130,200M1070,150 1140,110 1250,90M1150,0 1155,100 1180,140 1240,170 1350,158M1240,0 1260,120 1290,150M1290,100 1300,50 1380,40 1390,155M1380,30 1400,0M1280,140 1390,110M1240,170 1300,250 1470,240 1535,240M1290,150 1350,200 1370,310 1430,400M1145,205 1150,160 1210,160M1200,170 1310,260M1330,180 1280,270 1240,320 1200,340 1190,400M1310,250 1370,310M1240,320 1300,450M1300,280 1300,370 1310,460M1160,290 1180,280 1210,300 1170,295M1080,260 1140,220 1220,250 1270,290M1050,240 1090,240 1080,340M1535,110 1470,160 1350,310M1400,360 1450,420 1535,420M1310,460 1400,430 1440,410M1370,310 1535,490M1500,300 1490,540 1535,560M1495,180 1535,220M1330,600 1380,735M1230,620 1340,520 1500,500M1510,580 1530,660M1320,740 1360,830 1535,860M1350,740 1400,800 1535,830M1400,740 1390,870M1260,860 1440,820 1390,740M1290,870 1430,930 1400,1000 1300,940 1370,880M1270,900 1300,870M1430,930 1410,990M1400,990 1430,1010 1535,1050M1360,970 1320,1100M1430,1020 1415,1120M1415,1020 1430,1120M1430,1010 1535,970M1330,1070 1440,1190 1535,1280M1430,1060 1535,1200M1350,1200 1535,1195M1320,1110 1400,1260 1500,1320M1350,1200 1410,1320 1535,1335M1400,1190 1535,1310M1525,1250 1525,1370M920,905 1120,915M1020,820 1015,970M1120,915 1200,830M1150,920 1240,1000 1180,1040 1150,1090M1130,970 1120,980 1020,990M1000,990 1140,990 1220,1080 1230,1100M1180,930 1110,1060M1150,980 1180,1040 1260,1000M850,1090 940,1060 970,1110 1000,1130M840,1160 910,1135M800,1110 850,1090 830,1010 780,1000M770,980 820,970 810,900 700,920M690,990 830,1000M810,900 830,960M835,1130 840,1270 890,1320 890,1370M770,990 830,1150M920,1080 930,1200M1070,1110 1060,1200 1000,1190M1110,1100 1140,1140 1140,1200 1100,1260M1060,1110 1100,1110M1010,1100 990,1140 1010,1220M1000,1280 1040,1270M950,1300 990,1300M1190,1200 1200,1330 1210,1370M1180,1370 1200,1300M1060,1330 1140,1330M1080,1300 1040,1250M1050,1230 1110,1180 1130,1220M1020,1250 1060,1330M600,1200 650,1300 660,1370M560,1270 700,1310 790,1300M550,1240 600,1370M540,1370 590,1330 620,1330M640,1040 610,1370M640,1040 690,1040 710,1160M590,1090 640,1040 630,980 610,850M510,790 580,910 590,990 570,1060M510,780 520,860 580,900M640,830 640,980M660,840 630,1050M520,850 600,760M530,790 590,770 610,830M400,920 440,860 560,1030M470,990 420,910 380,940 400,1000 450,1100 470,1180 500,1170 500,1110 460,1090 410,1110M380,1080 450,1200M510,1110 550,1050 490,980M520,1200 500,1110M380,950 520,1250M310,1010 380,1080M260,870 310,940 350,930M220,910 300,870 360,850M220,920 310,940M200,780 230,910 180,910 130,900M100,850 200,870M220,790 230,900 280,990M60,1000 160,950 180,920M160,920 180,1010 160,1070 110,1060 60,990M150,1190 140,1370M190,1190 210,1250 215,1370M260,1110 260,1240 350,1280M290,1190 310,1370M310,1140 360,1280M340,1130 420,1260 480,1370M360,1340 440,1290 550,1240M360,1370 380,1320M215,1360 270,1360M180,1190 200,1280M230,1280 300,1370M100,1340 150,1320M0,1180 40,1100M0,1210 50,1150M0,1290 50,1290M0,1330 20,1370M0,1000 20,1020M0,900 60,850 130,820M60,840 90,860 110,830 60,830M90,950 100,940 160,940M100,800 90,750 20,700M20,700 10,600 0,590M15,570 10,700M0,620 150,630 300,600 400,500M240,570 300,700M260,590 290,690M270,550 440,750M300,600 230,500M350,600 400,560 530,480M280,560 500,900M380,400 450,440 490,510M410,400 430,450M400,480 530,400M440,460 490,400M470,580 560,520M490,400 540,500 590,550M550,400 650,470M520,390 500,430 620,560M560,540 650,460M590,560 640,500M650,640 610,700 580,760M570,740 560,720 600,680 610,700M725,705 780,680M730,740 730,760M1020,750 1060,720 1110,740 1200,640M1160,760 1220,700 1230,740M1180,780 1260,760 1280,770M830,820 840,760M1000,770 1120,775M850,770 1070,765M1150,900 1230,790M180,400 240,300M200,310 255,290',
  },
].map((tile) => ({
  ...tile,
  water: smooth(tile.water),
  narrow: tile.narrow ? smooth(tile.narrow) : undefined,
  major: smooth(tile.major),
  medium: smooth(tile.medium),
  minor: smooth(tile.minor),
}))

const place = (tile: Tile) => `translate(${tile.x} ${tile.y}) scale(.3954 .3333)`
</script>

<template>
  <div class="window">
    <div class="page">
      <header class="navbar">
        <svg class="logo" viewBox="0 0 100 100" aria-hidden="true">
          <defs>
            <clipPath id="disc"><ellipse cx="50" cy="50" rx="50" ry="50" /></clipPath>
            <clipPath id="noodles"><rect x="0" y="20" width="100" height="30" /></clipPath>
          </defs>
          <rect width="100" height="100" fill="#fff" />
          <g clip-path="url(#disc)">
            <rect width="100" height="100" fill="#c55145" />
            <path d="M83 50L108 76 80 108H60L33 79Z" fill="#932d27" />
            <g clip-path="url(#noodles)" fill="#f0c66f" stroke="#dda052" stroke-width="2.6">
              <circle cx="49" cy="47" r="14" stroke="#f0c66f" stroke-width="1" />
              <circle cx="49" cy="47" r="10.5" />
              <path d="M50 32.500A14 14 0 0 1 61 40L56 50H50Z" fill="#c98230" stroke="none" />
              <circle cx="33" cy="50" r="12" stroke="#f0c66f" stroke-width="1" />
              <circle cx="33" cy="50" r="8.500" />
              <circle cx="33" cy="50" r="3.600" />
              <circle cx="64" cy="50" r="14" stroke="#f0c66f" stroke-width="1" />
              <circle cx="64" cy="50" r="10" />
              <circle cx="64" cy="50" r="5" />
            </g>
            <path d="M61.500 24V43M67.500 19V40" stroke="#f0c66f" stroke-width="2.800" />
            <path d="M28 16.800H50M22.500 22.300H50" stroke="#cfc096" stroke-width="3" stroke-linecap="round" />
            <path d="M50 16.800H72M50 22.300H67" stroke="#b39b73" stroke-width="3" stroke-linecap="round" />
            <path d="M17 50H83A33 33.500 0 0 1 17 50Z" fill="#ecddba" />
            <path d="M48.500 50H83A33 33.500 0 0 1 48.500 83.400Z" fill="#d2c29c" />
          </g>
        </svg>
        <nav class="links">
          <a v-for="link in links" :key="link.label" class="link" :class="{ active: link.active }">{{ link.label }}</a>
        </nav>
      </header>

      <section class="banner">
        <p class="banner-text">Commandez maintenant !</p>
        <a class="button">CLICK &amp; COLLECT</a>
      </section>

      <main class="content">
        <section class="addresses">
          <h1 class="title">NOS ADRESSES</h1>
          <article
            v-for="address in addresses"
            :key="address.name"
            class="address"
            :class="{ selected: address.selected }"
          >
            <h2 class="name">{{ address.name }}</h2>
            <p v-for="line in address.lines" :key="line" class="line">{{ line }}</p>
          </article>
        </section>

        <svg class="map" viewBox="0 0 1200 902" aria-label="Paris">
          <rect width="1200" height="902" fill="#dfdfde" />
          <g v-for="tile in tiles" :key="tile.id + '-ground'" :transform="place(tile)">
            <path class="park" :d="tile.parks" />
            <path v-if="tile.pale" class="pale" :d="tile.pale" />
          </g>
          <g v-for="tile in tiles" :key="tile.id + '-bank'" :transform="place(tile)">
            <path class="road bank" :d="tile.water" />
          </g>
          <g v-for="tile in tiles" :key="tile.id + '-river'" :transform="place(tile)">
            <path class="road shore" :d="tile.water" />
            <path class="road river" :d="tile.water" />
            <path v-if="tile.narrow" class="road stream" :d="tile.narrow" />
          </g>
          <g v-for="tile in tiles" :key="tile.id + '-roads'" :transform="place(tile)">
            <path class="road minor" :d="tile.minor" />
            <path class="road medium" :d="tile.medium" />
            <path class="road major" :d="tile.major" />
          </g>
          <path
            d="M702 99.500C701 89 692.500 85 692.500 78.500A9.700 9.700 0 0 1 711.900 78.500C711.900 85 703.500 89 702.500 99.500Z"
            fill="#e93323"
            stroke="#5d1b14"
            stroke-width="1"
          />
          <circle cx="702.200" cy="78" r="3.400" fill="#000" />
        </svg>
      </main>
    </div>
    <div class="scrollbar"><div class="thumb"></div></div>
  </div>
</template>

<style>
body {
  overflow: hidden;
  background: #f7f7f7;
}
</style>

<style scoped>
.window {
  box-sizing: border-box;
  display: flex;
  width: 2880px;
  height: 1558px;
  border-top: 2px solid #6f7c83;
  background: #f7f7f7;
  color: #000;
  font-family: "Liberation Sans", Arial, sans-serif;
}

.page {
  width: 2850px;
}

.navbar {
  display: flex;
  height: 108px;
  padding-left: 20px;
}

.logo {
  width: 100px;
  height: 100px;
}

.links {
  display: flex;
  align-items: flex-start;
  gap: 29.500px;
  margin: 43px 0 0 39.500px;
}

.link {
  height: 24px;
  border-bottom: 2px solid transparent;
  font-size: 24px;
  font-weight: 700;
  line-height: 27px;
  letter-spacing: 0.080px;
}

.link.active {
  border-color: #c84f39;
}

.banner {
  display: flex;
  flex-direction: column;
  align-items: center;
  box-sizing: border-box;
  height: 323px;
  padding-top: 81px;
  background: #c84f39;
  color: #fff;
}

.banner-text {
  margin: 0 0 40px;
  font-size: 36px;
  line-height: 42px;
  letter-spacing: 0.150px;
}

.button {
  width: 354px;
  height: 80px;
  background: #000;
  font-size: 28px;
  font-weight: 700;
  line-height: 78px;
  text-align: center;
}

.content {
  display: flex;
  justify-content: space-between;
  padding: 100px 142px 0 143px;
}

.title {
  margin: 6px 0 62px;
  font-size: 64px;
  line-height: 70px;
  letter-spacing: -0.400px;
}

.address {
  margin: 0 0 60px 29px;
}

.name {
  margin: 0 0 16px;
  font-size: 36px;
  line-height: 44px;
  letter-spacing: -0.150px;
}

.line {
  margin: 0;
  font-size: 28px;
  line-height: 44px;
  letter-spacing: 0.050px;
}

.address.selected {
  height: 210px;
  margin: 0 0 61px;
  padding-left: 29px;
  border-left: 4px solid #c84f39;
}

.selected .name {
  margin: 0;
  padding-top: 2px;
  font-size: 48px;
  line-height: 56px;
  letter-spacing: -0.250px;
}

.selected .line {
  font-size: 32px;
  line-height: 38px;
}

.map {
  width: 1200px;
  height: 902px;
  overflow: hidden;
}

.park {
  fill: #a8a8a8;
}

.pale {
  fill: #e6e6e5;
}

.road {
  fill: none;
  stroke-linecap: round;
  stroke-linejoin: round;
  vector-effect: non-scaling-stroke;
}

.bank {
  stroke: #5f5f5c;
  stroke-width: 20px;
}

.shore {
  stroke: #e6e6e5;
  stroke-width: 14.500px;
}

.river {
  stroke: #fff;
  stroke-width: 8px;
}

.stream {
  stroke: #fafafa;
  stroke-width: 4px;
}

.minor {
  stroke: #6a6a67;
  stroke-width: 2.300px;
}

.medium {
  stroke: #5c5c59;
  stroke-width: 3.300px;
}

.major {
  stroke: #545451;
  stroke-width: 5.500px;
}

.scrollbar {
  box-sizing: border-box;
  width: 30px;
  padding: 6px 0 0 6px;
  border-right: 2px solid #555452;
  border-left: 2px solid #454545;
  background: #2c2c2c;
}

.thumb {
  width: 16px;
  height: 1140px;
  border-radius: 8px;
  background: #6c6c6c;
}
</style>
